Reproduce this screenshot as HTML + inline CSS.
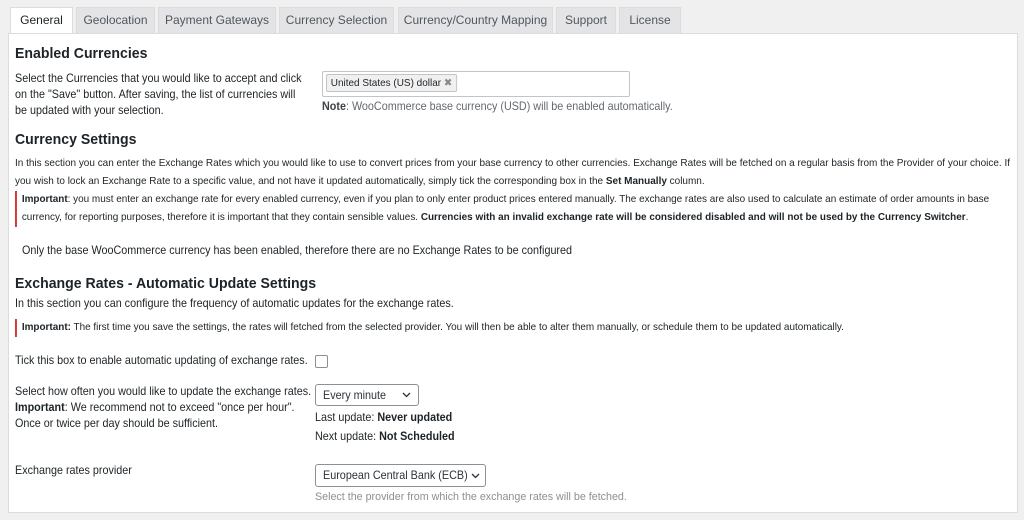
<!DOCTYPE html>
<html><head><style>
body{margin:0;width:1024px;height:520px;background:#f0f0f1;font-family:"Liberation Sans",Arial,sans-serif;color:#3c434a;position:relative;overflow:hidden}
.a{position:absolute;white-space:nowrap;transform-origin:0 0}
.tab{position:absolute;top:7px;height:26px;box-sizing:border-box;border:1px solid #dcdcde;border-bottom:none;background:#e4e4e6;font-size:12px;color:#50575e;text-align:center;line-height:25px}
.tab.on{background:#fff;color:#1d2327;height:27px}
.panel{position:absolute;left:8px;top:33px;width:1010px;height:480px;background:#fff;border:1px solid #dcdcde;box-sizing:border-box}
h2{position:absolute;margin:0;font-size:15px;font-weight:bold;color:#1d2327;white-space:nowrap;transform:scaleX(0.94);transform-origin:0 0}
.t{font-size:11.6px;line-height:16px;color:#1d2327;transform:scaleX(0.93)}
.s{font-size:10.2px;line-height:18px;color:#1d2327;transform:scaleX(0.98)}
.imp{border-left:2px solid #d63638;padding-left:5px}
.sel{position:absolute;border:1px solid #8c8f94;border-radius:3px;background:#fff;font-size:12px;color:#2c3338;box-sizing:border-box;padding-left:7px;line-height:20px}
.sel span{display:inline-block;transform:scaleX(0.9);transform-origin:0 0;white-space:nowrap}
.chev{position:absolute;right:7px;top:7px}
</style></head><body>
<div class="tab on" style="left:10px;width:63px">General</div>
<div class="tab" style="left:76px;width:79px">Geolocation</div>
<div class="tab" style="left:158px;width:118px">Payment Gateways</div>
<div class="tab" style="left:279px;width:115px">Currency Selection</div>
<div class="tab" style="left:398px;width:155px">Currency/Country Mapping</div>
<div class="tab" style="left:556px;width:60px">Support</div>
<div class="tab" style="left:619px;width:62px">License</div>
<div class="panel"></div>

<h2 style="left:15px;top:45px">Enabled Currencies</h2>
<div class="a t" style="left:15px;top:71px">Select the Currencies that you would like to accept and click<br>on the "Save" button. After saving, the list of currencies will<br>be updated with your selection.</div>
<div class="a" style="left:322px;top:71px;width:308px;height:26px;border:1px solid #c3c4c7;box-sizing:border-box;border-radius:2px"></div>
<div class="a" style="left:326px;top:74px;height:16px;padding:0 4px;background:#f0f0f1;border:1px solid #c3c4c7;border-radius:2px;font-size:10.5px;line-height:16px;color:#1d2327;transform:scaleX(0.95)">United States (US) dollar <span style="color:#888">✖</span></div>
<div class="a" style="left:322px;top:100px;font-size:11.6px;color:#646970;transform:scaleX(0.93)"><b style="color:#3c434a">Note</b>: WooCommerce base currency (USD) will be enabled automatically.</div>

<h2 style="left:15px;top:131px">Currency Settings</h2>
<div class="a s" style="left:15px;top:155px">In this section you can enter the Exchange Rates which you would like to use to convert prices from your base currency to other currencies. Exchange Rates will be fetched on a regular basis from the Provider of your choice. If<br>you wish to lock an Exchange Rate to a specific value, and not have it updated automatically, simply tick the corresponding box in the <b>Set Manually</b> column.</div>
<div class="a s imp" style="left:15px;top:191px;transform:scaleX(0.975)"><b>Important</b>: you must enter an exchange rate for every enabled currency, even if you plan to only enter product prices entered manually. The exchange rates are also used to calculate an estimate of order amounts in base<br>currency, for reporting purposes, therefore it is important that they contain sensible values. <b>Currencies with an invalid exchange rate will be considered disabled and will not be used by the Currency Switcher</b>.</div>
<div class="a t" style="left:22px;top:243px">Only the base WooCommerce currency has been enabled, therefore there are no Exchange Rates to be configured</div>

<h2 style="left:15px;top:275px">Exchange Rates - Automatic Update Settings</h2>
<div class="a t" style="left:15px;top:296px">In this section you can configure the frequency of automatic updates for the exchange rates.</div>
<div class="a s imp" style="left:15px;top:319px;transform:scaleX(0.975)"><b>Important:</b> The first time you save the settings, the rates will fetched from the selected provider. You will then be able to alter them manually, or schedule them to be updated automatically.</div>

<div class="a t" style="left:15px;top:353px">Tick this box to enable automatic updating of exchange rates.</div>
<div class="a" style="left:315px;top:355px;width:11px;height:11px;border:1px solid #8c8f94;border-radius:2px;background:#fff"></div>

<div class="a t" style="left:15px;top:384px">Select how often you would like to update the exchange rates.<br><b>Important</b>: We recommend not to exceed "once per hour".<br>Once or twice per day should be sufficient.</div>
<div class="sel" style="left:315px;top:384px;width:104px;height:22px"><span>Every minute</span><svg class="chev" width="9" height="6" viewBox="0 0 9 6"><path d="M1 1l3.5 3.5L8 1" fill="none" stroke="#2c3338" stroke-width="1.3"/></svg></div>
<div class="a t" style="left:315px;top:410px">Last update: <b>Never updated</b></div>
<div class="a t" style="left:315px;top:429px">Next update: <b>Not Scheduled</b></div>

<div class="a t" style="left:15px;top:463px">Exchange rates provider</div>
<div class="sel" style="left:315px;top:464px;width:171px;height:23px;line-height:21px"><span>European Central Bank (ECB)</span><svg class="chev" width="9" height="6" viewBox="0 0 9 6" style="top:8px;right:5px"><path d="M1 1l3.5 3.5L8 1" fill="none" stroke="#2c3338" stroke-width="1.3"/></svg></div>
<div class="a" style="left:315px;top:491px;font-size:11.4px;color:#8c8f94;transform:scaleX(0.94)">Select the provider from which the exchange rates will be fetched.</div>
</body></html>
